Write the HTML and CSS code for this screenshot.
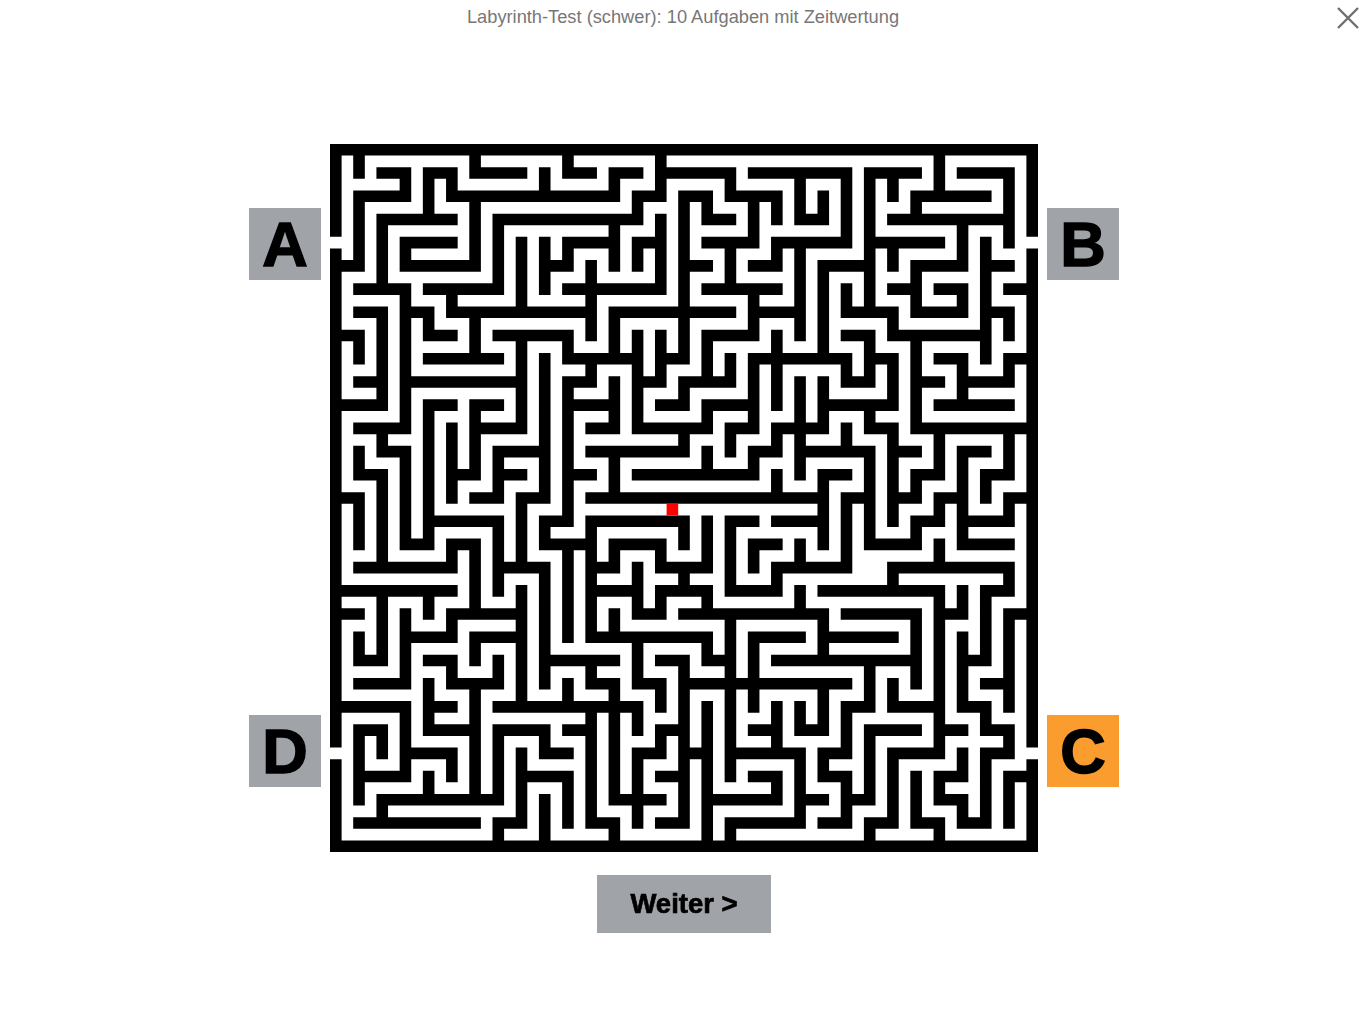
FILE: index.html
```html
<!DOCTYPE html>
<html lang="de">
<head>
<meta charset="utf-8">
<title>Labyrinth-Test</title>
<link rel="stylesheet" href="styles.css">
</head>
<body>
<header class="title">Labyrinth-Test (schwer): 10 Aufgaben mit Zeitwertung</header>
<button class="close" aria-label="Schließen"><svg viewBox="0 0 22 22" width="22" height="22"><path d="M1 1L21 21M21 1L1 21"/></svg></button>
<main class="stage">
  <div class="labels">
    <div class="label">A</div>
    <div class="label">D</div>
  </div>
  <svg class="maze" viewBox="-0.25 -0.25 30.5 30.5" width="708" height="708">
    <path class="walls" d="M0 0H30M0 30H30M0 0V3.5M0 4.5V25.5M0 26.5V30M30 0V3.5M30 4.5V25.5M30 26.5V30
    M1 0V1M2 1H3V2M1 5V2H3M0 5H1M4 3V1H5V2M2 6V3H5M6 2V5H3V4H5M6 0V1H8M9 1V2M10 0V1H11
    M4 6H7V3H13V2H14V0M8 4V7M9 4V6M10 4V5H9M10 6H14V3M10 4H12M12 3V5M1 6H3M3 6V12H1M5 6V7H11
    M1 7H2V11H0M2 10H1M3 7H4V8H5M6 7V9M4 9H7M0 8H1V9M7 8H10V9H13M8 8V12H6M9 9V15M3 10H8
    M13 1H12V2M5 2H12M14 1H17V2H19V3M18 2V4H16M18 1H22V4H19M20 1V3H21V2M15 2H16V3H17M15 2V9M13 4H14M13 4V5
    M11 5V8M15 5H16M17 4V6M16 6H19M18 5H19V4M20 4V8M18 6V8H16V10M18 7H20M12 7H17M12 7V9
    M13 8V10H14V8M14 9H15M11 9V10H10M15 10H17V9M19 8V11M18 9H22V10H23V8H22M18 9V12H17V13M20 10V14M21 10V12M23 9H24V11H21
    M25 8V12H30M25 10H26M26 11H29M27 9V11M26 9H27M27 10H29V9H30
    M23 1H25M23 1V7M24 1V2M26 0V2M25 2H28M25 2V3M24 3H29M27 1H29V4M27 3V5H25V7H27V6H26M23 4H26M24 4V5M21 5H23M21 5V9H20
    M24 6H25M22 6V7H24V8H28M28 4V9M28 5H29M29 6H30M28 7H29V8
    M4 11V17H3V13H2V12M3 12H1M4 11H5M3 10H8V12M6 12H8M6 11V14H5M6 11H7M5 12V15
    M1 13V14H2V18M1 18H5V17H6V20M0 15H1V17M7 13H9M7 13V15H6M7 14H8M9 15H8V18M7 16V19M4 16H7M7 18H9V20M8 19V24M0 19H5
    M10 10V16H9V17H11M10 17V21M2 19V22H1V21M4 19V20M0 20H1M5 20H8M10 11H12M12 10V12H11
    M13 10V12H16V11H18V12M18 10V11M17 12V13M14 11H15V10M15 12V13H11M12 13V15M16 13V14M13 14H18V13H19V12H21M19 10V11M10 14H11
    M11 15H20M19 14V15M20 15H21M11 16H15V17M16 16V18H14V17H12V18H11M11 16V20M14 19H16V20M14 19V20H13V18M15 18V19M11 19H13M15 20H20
    M17 16V19H19V18H21M17 16H18M19 16H21M18 18V17H19M20 17V18M20 19V20M12 20V21M20 20H21
    M24 12V16M23 11V12H24M22 12V13M20 13H23V17H25V16H26V15H27M24 13H25M26 12V14H25V15H24M27 13V17H29M27 13H28M27 16H29V15H30M29 12V14H28V15
    M21 14H22M21 14V17M20 15H21M20 16H21M22 15H23M22 15V18H20M26 17V18M24 18H29M24 18V19M29 18V19H28V20M21 19H26V20H27V19M22 20H25M29 20H30
    M3 20V23H1M3 21H5V20M6 21H8M6 21V22M4 22H5V23H7V22M4 23V25H6M6 23V28M4 24H5M0 24H3V27H1M3 26H5V27M1 25V28M1 25H2V26M4 27V28M2 28H7M2 28V29M1 29H6
    M7 25V28M7 25H9V26H10M7 24H12V23H11V22M9 20V23M9 22H12M10 20V21M10 23V24M8 26V29H7V30M8 27H10M9 28V30M10 27V29
    M11 20V21H16V22H17M12 20V21M17 20V27M13 21V23H14V24M12 23V28M12 24H13V25M15 22H14M15 22V29M15 23H22M18 21V24M11 24V29H12V30M10 25H11M14 25H15M14 25V26H13V29M13 28H12M14 28H13M14 27H15M14 29H15M16 24V30M15 26H16
    M18 25H19M19 24V26M17 26H20M20 24V25H21V23M20 26V29M17 29H20M17 29V30M18 27H19V28H16M18 21H20M19 22H25M25 20V23M21 20V22M21 21H24M23 22V24H22V26H21V27H22V29H21M23 25V28H22M23 25H25M20 28H21M24 23V24H26M26 20V26H24V29H23V30
    M26 25H27M27 21V24H28V25H29V26H28V29H27V28H26V27H27V26M28 20V22H27M29 20V24M28 23H29M25 27V29H26V30M29 27H30M29 27V29"/>
    <rect class="marker" x="14.25" y="15.25" width="0.5" height="0.5"/>
  </svg>
  <div class="labels">
    <div class="label">B</div>
    <div class="label active">C</div>
  </div>
  <button class="next">Weiter &gt;</button>
</main>
</body>
</html>
```
FILE: styles.css
```css
html, body {
  margin: 0;
  padding: 0;
  background: #fff;
  font-family: "Liberation Sans", Arial, sans-serif;
}
body {
  height: 1024px;
  overflow: hidden;
  position: relative;
}
.title {
  height: 34px;
  line-height: 34px;
  text-align: center;
  font-size: 18.25px;
  color: #777;
}
.close {
  position: absolute;
  top: 7px;
  right: 7px;
  width: 22px;
  height: 22px;
  padding: 0;
  border: 0;
  background: none;
}
.close svg { display: block; }
.close path {
  fill: none;
  stroke: #6f6f6f;
  stroke-width: 2.4;
}
.stage {
  display: grid;
  grid-template-columns: 72px 708px 72px;
  column-gap: 9px;
  row-gap: 23px;
  margin: 109.5px 0 0 249px;
  width: 870px;
}
.labels {
  display: flex;
  flex-direction: column;
  justify-content: space-between;
  padding: 64.5px 0 64.5px;
}
.label {
  width: 72px;
  height: 72px;
  background: #a0a4a8;
  color: #000;
  font-size: 63px;
  font-weight: 700;
  line-height: 72px;
  text-align: center;
  -webkit-text-stroke: 1.5px #000;
  filter: blur(0.4px);
}
.label.active { background: #fb9c2f; }
.maze {
  display: block;
  filter: blur(0.35px);
}
.walls {
  fill: none;
  stroke: #000;
  stroke-width: 0.5;
  stroke-linecap: square;
  stroke-linejoin: miter;
}
.marker { fill: #f00; }
.next {
  grid-column: 2;
  justify-self: center;
  width: 174px;
  height: 58px;
  border: 0;
  padding: 0;
  background: #a0a4a8;
  color: #000;
  font-family: inherit;
  font-size: 27.5px;
  font-weight: 700;
  -webkit-text-stroke: 0.7px #000;
  filter: blur(0.4px);
}
```
